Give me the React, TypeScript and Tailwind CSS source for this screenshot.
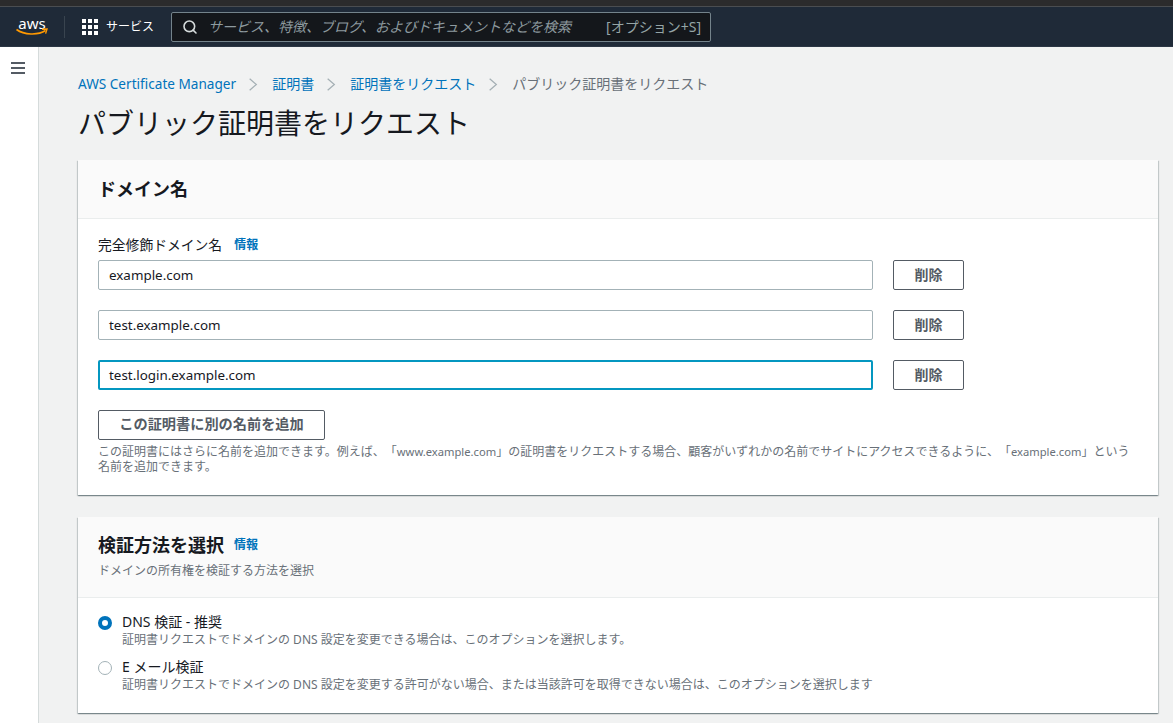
import { Search } from "lucide-react";

const font = { fontFamily: '"Noto Sans", "Noto Sans CJK JP", sans-serif' };

const domains = ["example.com", "test.example.com", "test.login.example.com"];

function AwsLogo() {
  return (
    <div className="relative w-[32px] h-[22px]">
      <span className="block text-[15px] leading-[14px] text-white text-center">aws</span>
      <svg viewBox="0 0 32 8" className="absolute left-0 top-[12px] w-[32px] h-[8px]">
        <path d="M0.5 1.5C8 7 22 7.5 29.5 2.5" fill="none" stroke="#f90" strokeWidth="1.6" />
        <path d="M26 1.2L31 1L29.6 5.6" fill="none" stroke="#f90" strokeWidth="1.4" />
      </svg>
    </div>
  );
}

function GridIcon() {
  return (
    <div className="grid grid-cols-3 gap-[2px] w-[16px] h-[16px]">
      {Array.from({ length: 9 }).map((_, i) => (
        <div key={i} className="w-[4px] h-[4px] bg-white" />
      ))}
    </div>
  );
}

function Chevron() {
  return (
    <svg viewBox="0 0 12 16" className="w-[10px] h-[15px] ml-[12px] mr-[14px]">
      <path d="M2 1l8 7-8 7" fill="none" stroke="#a5b0b5" strokeWidth="1.5" />
    </svg>
  );
}

function HamburgerIcon() {
  return (
    <svg viewBox="0 0 14 12" className="w-[14px] h-[12px]">
      <path d="M0 1h14M0 6h14M0 11h14" fill="none" stroke="#545b64" strokeWidth="2" />
    </svg>
  );
}

function Header() {
  return (
    <div>
      <div className="h-[7px] bg-[#2b2b2c] border-b border-[#4a4d50]" />
      <header className="h-[40px] bg-[#1f2a38] border-b border-[#2b3644] flex items-center pl-[16px]">
        <AwsLogo />
        <div className="w-px h-[22px] bg-[#39444f] ml-[16px] mr-[17px]" />
        <GridIcon />
        <span className="ml-[8px] text-[12px] text-white">サービス</span>
        <div className="ml-[17px] w-[540px] h-[30px] bg-[#14171b] border border-[#74838b] rounded-[2px] flex items-center pl-[10px] pr-[9px]">
          <Search size={16} strokeWidth={2.4} className="text-[#d5dbdb]" />
          <span className="ml-[10px] text-[14px] italic text-[#8d9a9f] [text-spacing-trim:space-all]">
            サービス、特徴、ブログ、およびドキュメントなどを検索
          </span>
          <span className="ml-auto text-[14px] text-[#95a5a6]">[オプション+S]</span>
        </div>
      </header>
    </div>
  );
}

function Breadcrumb() {
  return (
    <nav className="flex items-center text-[14px] leading-[20px] text-[#0073bb]">
      <span className="text-[13.6px]">AWS Certificate Manager</span>
      <Chevron />
      <span>証明書</span>
      <Chevron />
      <span>証明書をリクエスト</span>
      <Chevron />
      <span className="text-[#687078]">パブリック証明書をリクエスト</span>
    </nav>
  );
}

function DomainRow({ value, focused }: { value: string; focused?: boolean }) {
  return (
    <div className="flex items-center gap-[20px] h-[30px]">
      <div
        className={
          focused
            ? "w-[775px] h-[30px] flex items-center pl-[9px] text-[13.4px] text-[#16191f] rounded-[2px] border-2 border-[#0497c0] bg-white"
            : "w-[775px] h-[30px] flex items-center pl-[10px] text-[13.4px] text-[#16191f] rounded-[2px] border border-[#a3b2b7] bg-white"
        }
      >
        {value}
      </div>
      <button className="w-[71px] h-[30px] pb-[2px] border border-[#545b64] rounded-[2px] bg-white text-[14px] font-bold text-[#545b64]">
        削除
      </button>
    </div>
  );
}

function DomainCard() {
  return (
    <section className="bg-white shadow-[0_1px_1px_0_rgba(0,28,36,0.3),1px_1px_1px_0_rgba(0,28,36,0.15),-1px_1px_1px_0_rgba(0,28,36,0.15)] h-[335px]">
      <div className="h-[59px] bg-[#fafafa] border-b border-[#eaeded] flex items-center pl-[20px]">
        <h2 className="text-[18px] font-bold text-[#16191f]">ドメイン名</h2>
      </div>
      <div className="px-[20px] pt-[16px]">
        <div className="flex items-center h-[20px] text-[13.8px] text-[#16191f]">
          完全修飾ドメイン名
          <span className="ml-[12px] text-[12px] font-bold text-[#0073bb]">情報</span>
        </div>
        <div className="mt-[5px] flex flex-col gap-[20px]">
          {domains.map((d, i) => (
            <DomainRow key={d} value={d} focused={i === 2} />
          ))}
        </div>
        <button className="mt-[20px] w-[227px] h-[30px] pb-[2px] border border-[#545b64] rounded-[2px] bg-white text-[14.2px] font-bold text-[#545b64]">
          この証明書に別の名前を追加
        </button>
        <p className="mt-[4px] text-[12px] leading-[15px] text-[#687078] [text-spacing-trim:space-all]">
          この証明書にはさらに名前を追加できます。例えば、「<span className="text-[11.2px]">www.example.com</span>」の証明書をリクエストする場合、顧客がいずれかの名前でサイトにアクセスできるように、「<span className="text-[11.2px]">example.com</span>」という
          <br />
          名前を追加できます。
        </p>
      </div>
    </section>
  );
}

function RadioOption({ label, desc, checked }: { label: string; desc: string; checked?: boolean }) {
  return (
    <div className="flex">
      <div
        className={
          checked
            ? "mt-[3px] w-[14px] h-[14px] rounded-full border-[4px] border-[#0073bb] bg-white"
            : "mt-[3px] w-[14px] h-[14px] rounded-full border border-[#a3b2b7] bg-white"
        }
      />
      <div className="ml-[10px]">
        <div className="text-[14px] leading-[18px] text-[#16191f]">{label}</div>
        <div className="text-[12px] leading-[18px] text-[#687078]">{desc}</div>
      </div>
    </div>
  );
}

function ValidationCard() {
  return (
    <section className="mt-[22px] bg-white shadow-[0_1px_1px_0_rgba(0,28,36,0.3),1px_1px_1px_0_rgba(0,28,36,0.15),-1px_1px_1px_0_rgba(0,28,36,0.15)] h-[196px]">
      <div className="h-[81px] bg-[#fafafa] border-b border-[#eaeded] pl-[20px] pt-[15px]">
        <div className="flex items-center h-[26px]">
          <h2 className="text-[18px] font-bold text-[#16191f]">検証方法を選択</h2>
          <span className="ml-[10px] text-[12px] font-bold text-[#0073bb]">情報</span>
        </div>
        <p className="mt-[5px] text-[12px] leading-[16px] text-[#687078]">ドメインの所有権を検証する方法を選択</p>
      </div>
      <div className="pl-[20px] pt-[15px] flex flex-col gap-[9px]">
        <RadioOption
          checked
          label="DNS 検証 - 推奨"
          desc="証明書リクエストでドメインの DNS 設定を変更できる場合は、このオプションを選択します。"
        />
        <RadioOption
          label="E メール検証"
          desc="証明書リクエストでドメインの DNS 設定を変更する許可がない場合、または当該許可を取得できない場合は、このオプションを選択します"
        />
      </div>
    </section>
  );
}

export default function App() {
  return (
    <div style={font} className="w-[1173px] h-[723px] overflow-hidden flex flex-col bg-[#f1f2f2]">
      <Header />
      <div className="flex flex-1">
        <aside className="w-[39px] bg-white border-r border-[#d5dbdb] pl-[11px] pt-[15px]">
          <HamburgerIcon />
        </aside>
        <main className="flex-1 pl-[39px] pr-[15px] pt-[27px]">
          <Breadcrumb />
          <h1 className="mt-[10px] text-[28px] leading-[38px] text-[#16191f]">パブリック証明書をリクエスト</h1>
          <div className="mt-[18px]">
            <DomainCard />
            <ValidationCard />
          </div>
        </main>
      </div>
    </div>
  );
}
